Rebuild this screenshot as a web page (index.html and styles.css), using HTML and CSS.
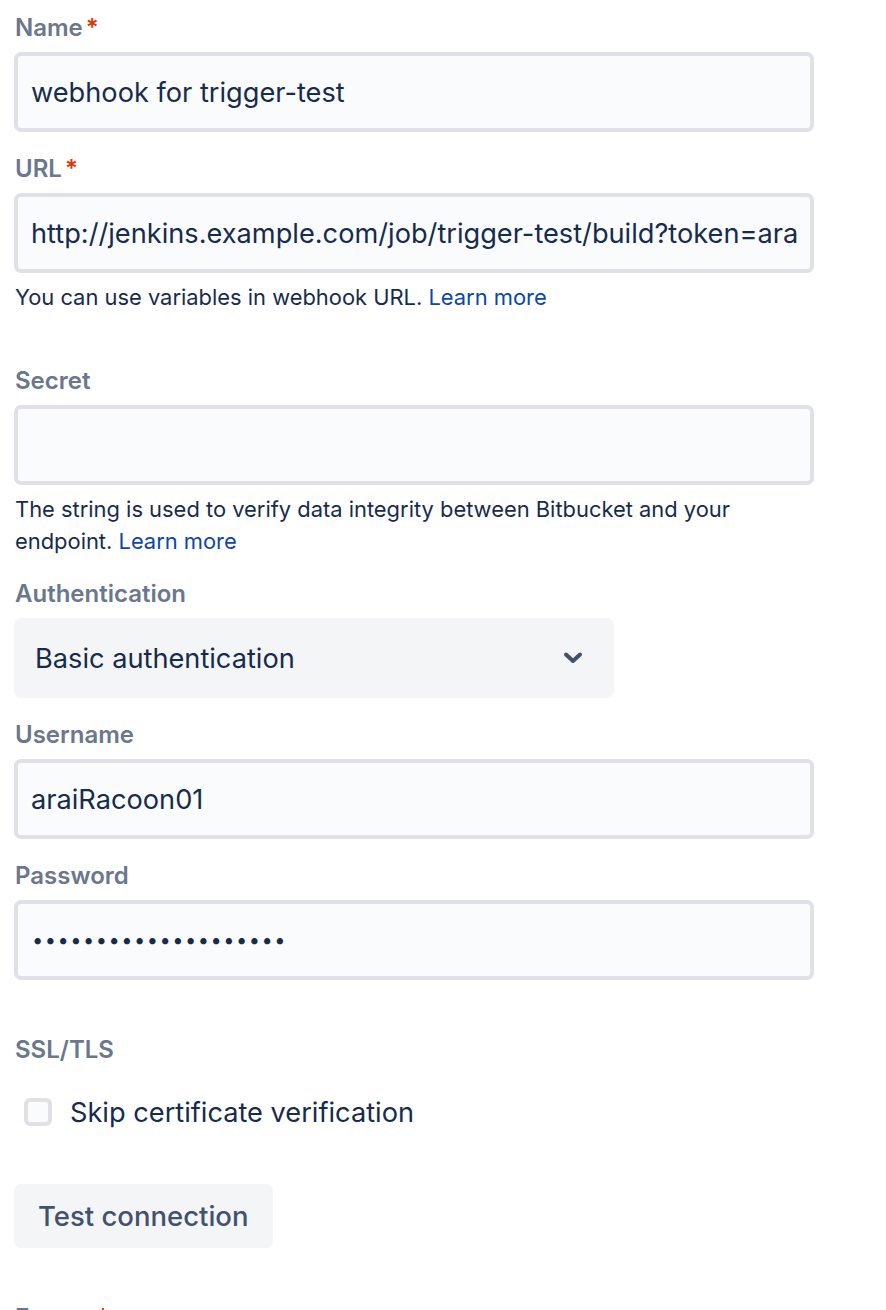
FILE: index.html
```html
<!DOCTYPE html>
<html lang="en">
<head>
<meta charset="utf-8">
<title>Webhook</title>
<link rel="stylesheet" href="styles.css">
</head>
<body>
<form class="form">
  <div class="field">
    <label class="label">Name<span class="req">*</span></label>
    <input class="input" type="text" value="webhook for trigger-test">
  </div>
  <div class="field">
    <label class="label">URL<span class="req">*</span></label>
    <input class="input" type="text" value="http://jenkins.example.com/job/trigger-test/build?token=araiRacoonToken">
    <p class="help">You can use variables in webhook URL. <a class="link" href="#">Learn more</a></p>
  </div>
  <div class="field field-spaced">
    <label class="label">Secret</label>
    <input class="input" type="text" value="">
    <p class="help">The string is used to verify data integrity between Bitbucket and your endpoint. <a class="link" href="#">Learn more</a></p>
  </div>
  <div class="field">
    <label class="label">Authentication</label>
    <div class="select">
      <span class="select-value">Basic authentication</span>
      <svg class="chevron" width="20" height="14" viewBox="0 0 20 14"><path d="M3 3.5 L10 10 L17 3.5" fill="none" stroke="#42526e" stroke-width="4" stroke-linecap="round" stroke-linejoin="round"/></svg>
    </div>
  </div>
  <div class="field">
    <label class="label">Username</label>
    <input class="input" type="text" value="araiRacoon01">
  </div>
  <div class="field">
    <label class="label">Password</label>
    <div class="input password"><span class="dots">••••••••••••••••••••</span></div>
  </div>
  <div class="field field-ssl">
    <label class="label">SSL/TLS</label>
    <label class="check">
      <span class="box"></span>
      <span class="check-text">Skip certificate verification</span>
    </label>
  </div>
  <div class="actions">
    <button class="button" type="button">Test connection</button>
  </div>
  <div class="field field-last">
    <label class="label">Events<span class="req">*</span></label>
  </div>
</form>
</body>
</html>
```

FILE: styles.css
```css
html, body {
  margin: 0;
  padding: 0;
  background: #ffffff;
}
body {
  font-family: Inter, "Noto Sans", "Liberation Sans", sans-serif;
  color: #172b4d;
  height: 1310px;
  overflow: hidden;
}
.form {
  padding: 14px 0 0 14px;
  width: 800px;
  display: flex;
  flex-direction: column;
}
.field {
  display: flex;
  flex-direction: column;
  margin-bottom: 23px;
}
.field-spaced { margin-top: 31px; }
.label {
  display: block;
  font-size: 24px;
  line-height: 28px;
  font-weight: 600;
  color: #6b778c;
  margin-bottom: 10px;
  padding-left: 1px;
}
.req {
  color: #de350b;
  margin-left: 3px;
}
.input {
  box-sizing: border-box;
  width: 800px;
  height: 80px;
  border: 4px solid #dfe1e6;
  border-radius: 7px;
  background: #fafbfc;
  padding: 0 13px;
  font-family: inherit;
  font-size: 27.2px;
  color: #172b4d;
  outline: none;
  margin: 0;
}
.password {
  display: flex;
  align-items: center;
}
.dots {
  font-size: 20px;
  letter-spacing: 1.5px;
  padding-left: 1px;
}
.help {
  margin: 8px 0 0 1px;
  font-size: 21.9px;
  line-height: 32px;
  color: #172b4d;
}
.link {
  color: #0b46ad;
  text-decoration: none;
}
.select {
  box-sizing: border-box;
  width: 600px;
  height: 80px;
  border-radius: 7px;
  background: #f4f5f7;
  display: flex;
  align-items: center;
  justify-content: space-between;
  padding: 0 31px 0 21px;
  font-size: 27.2px;
}
.chevron { display: block; }
.field-ssl { margin-top: 33px; margin-bottom: 52px; }
.field-ssl .label { margin-bottom: 28px; }
.check {
  display: flex;
  align-items: center;
  gap: 18px;
  padding-left: 10px;
  height: 40px;
}
.box {
  box-sizing: border-box;
  width: 28px;
  height: 28px;
  border: 4px solid #dfe1e6;
  border-radius: 6px;
  background: #fafbfc;
}
.check-text {
  font-size: 27.2px;
  color: #172b4d;
}
.actions { margin-bottom: 56px; }
.button {
  box-sizing: border-box;
  height: 64px;
  padding: 0 24px;
  border: none;
  border-radius: 7px;
  background: #f4f5f7;
  font-family: inherit;
  font-size: 27.5px;
  font-weight: 500;
  color: #42526e;
}
```
